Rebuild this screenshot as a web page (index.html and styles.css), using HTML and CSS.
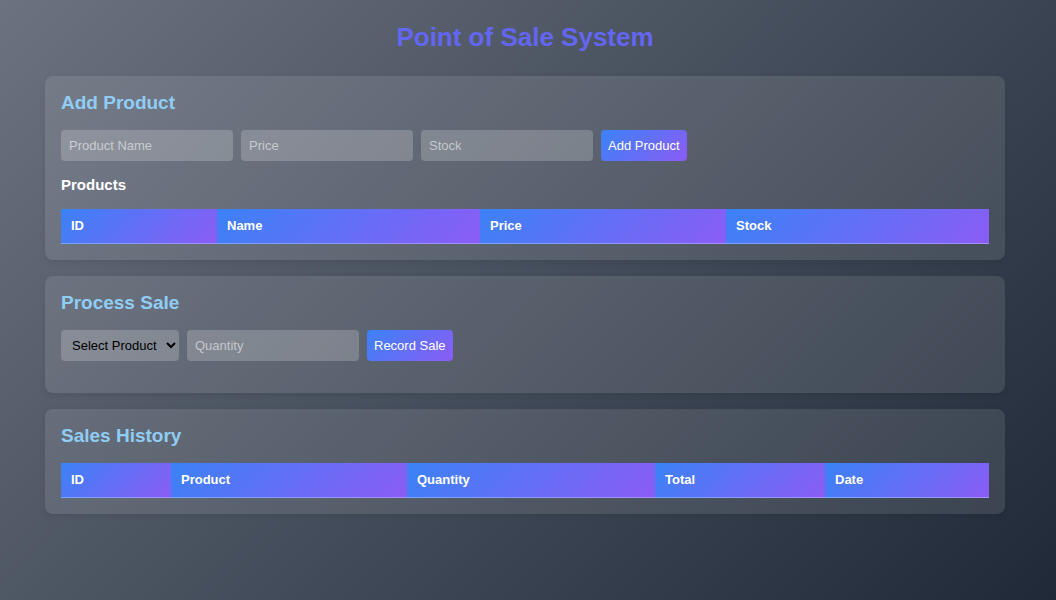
FILE: index.html
```html
<!DOCTYPE html>
<html lang="en">
<head>
<meta charset="utf-8">
<title>Point of Sale System</title>
<link rel="stylesheet" href="styles.css">
</head>
<body>
<div class="app">
  <h1 class="title">Point of Sale System</h1>

  <section class="card">
    <h2 class="card-title">Add Product</h2>
    <div class="form-row">
      <input class="field" type="text" placeholder="Product Name">
      <input class="field" type="text" placeholder="Price">
      <input class="field" type="text" placeholder="Stock">
      <button class="btn">Add Product</button>
    </div>
    <h3 class="sub-title">Products</h3>
    <table class="data-table products">
      <thead>
        <tr><th>ID</th><th>Name</th><th>Price</th><th>Stock</th></tr>
      </thead>
      <tbody></tbody>
    </table>
  </section>

  <section class="card">
    <h2 class="card-title">Process Sale</h2>
    <div class="form-row form-row-last">
      <select class="select">
        <option>Select Product</option>
      </select>
      <input class="field" type="text" placeholder="Quantity">
      <button class="btn">Record Sale</button>
    </div>
  </section>

  <section class="card">
    <h2 class="card-title">Sales History</h2>
    <table class="data-table sales">
      <thead>
        <tr><th>ID</th><th>Product</th><th>Quantity</th><th>Total</th><th>Date</th></tr>
      </thead>
      <tbody></tbody>
    </table>
  </section>
</div>
</body>
</html>
```

FILE: styles.css
```css
html {
  min-height: 100%;
  background: linear-gradient(135deg, #6b7280 0%, #1f2937 100%);
}

body {
  margin: 0;
  min-height: 100vh;
  padding: 20px 51px 20px 45px;
  box-sizing: border-box;
  font-family: "Liberation Sans", Arial, sans-serif;
  color: #ffffff;
}

.app {
  display: flex;
  flex-direction: column;
  gap: 16px;
}

.title {
  margin: 2px 0 8px;
  text-align: center;
  font-size: 26px;
  line-height: 30px;
  font-weight: bold;
  color: #6366f1;
}

.card {
  background: rgba(255, 255, 255, 0.1);
  border-radius: 8px;
  padding: 16px;
  box-shadow: 0 2px 6px rgba(0, 0, 0, 0.08);
}

.card-title {
  margin: 0 0 17px;
  font-size: 19px;
  line-height: 21px;
  color: #90cdf4;
}

.form-row {
  display: flex;
  gap: 8px;
  align-items: center;
}

.form-row-last {
  margin-bottom: 16px;
}

.field,
.select {
  box-sizing: border-box;
  height: 31px;
  border: none;
  border-radius: 4px;
  background: rgba(255, 255, 255, 0.2);
  font-family: "Liberation Sans", Arial, sans-serif;
  font-size: 13px;
  color: #ffffff;
  outline: none;
}

.field {
  width: 172px;
  padding: 8px;
}

.field::placeholder {
  color: rgba(255, 255, 255, 0.55);
}

.select {
  width: 118px;
  padding: 0 4px 0 7px;
  color: #000000;
}

.btn {
  height: 31px;
  padding: 0 7px;
  border: none;
  border-radius: 4px;
  background: linear-gradient(135deg, #3b82f6, #8b5cf6);
  color: #ffffff;
  font-family: "Liberation Sans", Arial, sans-serif;
  font-size: 13px;
  cursor: pointer;
}

.sub-title {
  margin: 15px 0 16px;
  font-size: 15px;
  line-height: 17px;
  color: #ffffff;
}

.data-table {
  width: 100%;
  border-collapse: collapse;
  table-layout: fixed;
}

.data-table th {
  padding: 9px 10px;
  text-align: left;
  font-size: 13px;
  line-height: 16px;
  font-weight: bold;
  color: #ffffff;
  background: linear-gradient(135deg, #3b82f6, #8b5cf6);
  border-bottom: 1px solid rgba(255, 255, 255, 0.3);
}

.products th:nth-child(1) { width: 136px; }
.products th:nth-child(2) { width: 243px; }
.products th:nth-child(3) { width: 226px; }

.sales th:nth-child(1) { width: 90px; }
.sales th:nth-child(2) { width: 216px; }
.sales th:nth-child(3) { width: 228px; }
.sales th:nth-child(4) { width: 150px; }
```
